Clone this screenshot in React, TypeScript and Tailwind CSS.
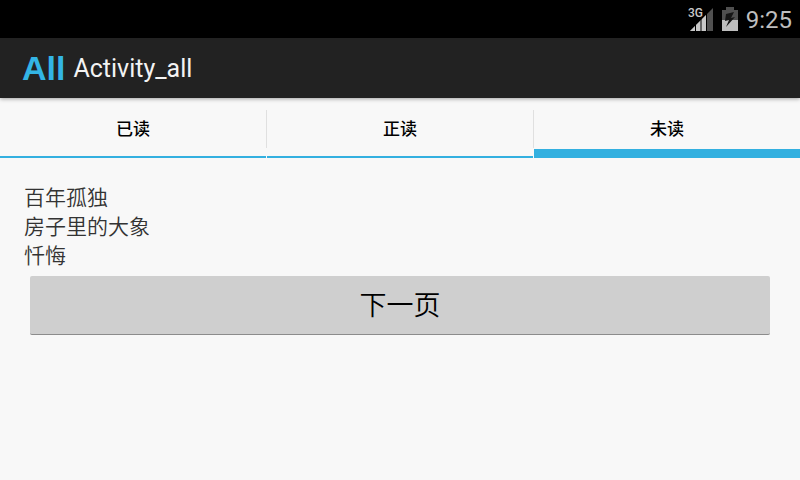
import React, { useState } from 'react';

interface Tab {
    id: string;
    label: string;
    books: string[];
}

const tabs: Tab[] = [
    { id: 'read', label: '已读', books: [] },
    { id: 'reading', label: '正读', books: [] },
    { id: 'unread', label: '未读', books: ['百年孤独', '房子里的大象', '忏悔'] },
];

const SignalIcon: React.FC = () => (
    <svg width="26" height="26" viewBox="0 0 26 26" aria-hidden="true">
        <path d="M2 25L25 2V25Z" fill="#505050" />
        <path d="M2 25L19 8V25Z" fill="#c8c8c8" />
        <path d="M7.5 18V25M13 12V25M18.5 7V25" stroke="#000" strokeWidth="1" />
        <path d="M0 0H14V12H0Z" fill="#000" />
        <text x="0" y="11" fontSize="12" fontWeight="500" fill="#c8c8c8" className="font-[Roboto,sans-serif]">3G</text>
    </svg>
);

const BatteryIcon: React.FC = () => (
    <svg width="16" height="25" viewBox="0 0 16 25" aria-hidden="true">
        <path d="M4 0H12V3H16V13H0V3H4Z" fill="#505050" />
        <path d="M0 13H16V24H0Z" fill="#bebebe" />
        <path d="M12 5L4 7L3 14L7 13L4 20L13 10L9 11Z" fill="#151515" />
    </svg>
);

const StatusBar: React.FC = () => (
    <div className="flex h-[38px] items-center justify-end bg-black pr-2">
        <SignalIcon />
        <div className="ml-2">
            <BatteryIcon />
        </div>
        <span className="ml-2 pt-0.5 text-2xl leading-6 text-[#bebebe]">9:25</span>
    </div>
);

const ActionBar: React.FC = () => (
    <header className="flex h-[60px] items-center gap-2 bg-[#222222] pl-[22px] shadow-[0_1px_4px_rgba(0,0,0,0.35)]">
        <span className="font-['Liberation_Sans',sans-serif] text-[34px] leading-9 font-bold text-[#33b5e5]">All</span>
        <h1 className="pt-0.5 text-[25px] leading-8 text-[#f3f3f3]">Activity_all</h1>
    </header>
);

export default function App() {
    const [activeId, setActiveId] = useState('unread');

    const activeTab = tabs.find(tab => tab.id === activeId) ?? tabs[0];

    return (
        <div className="min-h-screen bg-[#f8f8f8] font-[Roboto,'Noto_Sans_CJK_SC',sans-serif]">
            <StatusBar />
            <ActionBar />

            <div role="tablist" className="grid grid-cols-3 gap-px">
                {tabs.map((tab, index) => (
                    <div key={tab.id} className="relative">
                        <button
                            type="button"
                            role="tab"
                            aria-selected={tab.id === activeId}
                            onClick={() => setActiveId(tab.id)}
                            className={`flex h-[60px] w-full justify-center pt-[19px] text-[17px] leading-6 font-medium text-black border-[#33b0e0] ${
                                tab.id === activeId ? 'border-b-[9px]' : 'border-b-2'
                            }`}
                        >
                            {tab.label}
                        </button>
                        {/* divider between neighbouring tabs */}
                        {index > 0 && <span className="absolute top-3 -left-px h-[38px] w-px bg-[#e0e0e0]" />}
                    </div>
                ))}
            </div>

            <main className="px-6 pt-[26px]">
                <ul className="text-[21px] leading-[29px] font-[350] text-[#333333]">
                    {activeTab.books.map(book => (
                        <li key={book}>{book}</li>
                    ))}
                </ul>
                <div className="px-1.5 pt-[5px]">
                    <button
                        type="button"
                        className="flex h-[59px] w-full items-center justify-center rounded-xs border-b border-[#8c8c8c] bg-[#cfcfcf] pt-0.5 text-[27px] leading-8 font-[350] text-black"
                    >
                        下一页
                    </button>
                </div>
            </main>
        </div>
    );
}
